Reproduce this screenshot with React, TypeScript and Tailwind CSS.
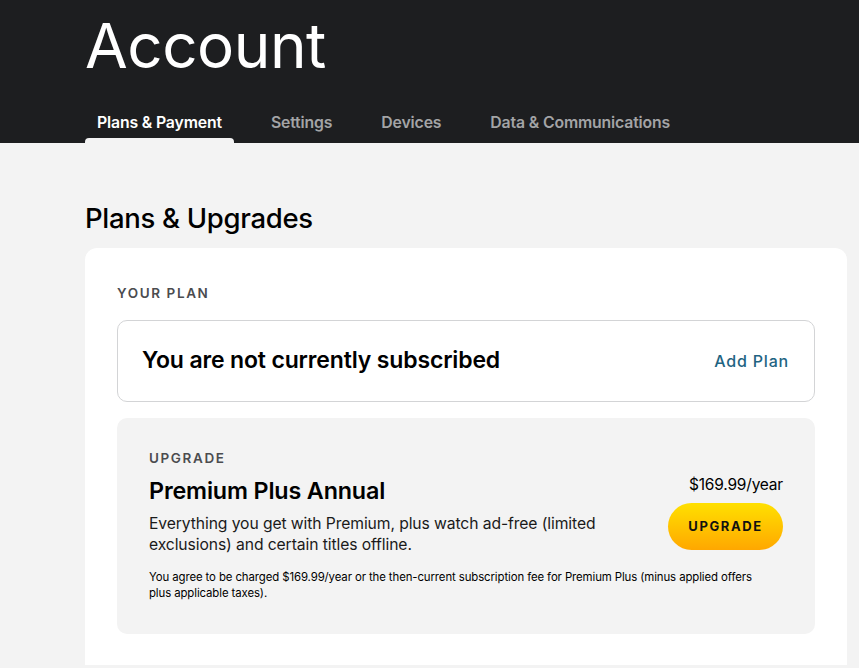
import React from "react"

const tabs = ["Plans & Payment", "Settings", "Devices", "Data & Communications"]

export default function App() {
  return (
    <div className="min-h-[668px] bg-[#f3f3f3] font-['Inter',sans-serif] text-black">
      {/* Header */}
      <div className="bg-[#1d1e20] h-[143px] px-[85px] flex flex-col">
        <h1 className="text-[62px] leading-none font-normal text-white mt-[15px] tracking-[-0.5px]">Account</h1>
        <div className="flex mt-auto">
          {tabs.map((t, i) => (
            <div key={t} className={`flex flex-col items-center ${i > 0 ? "ml-[25px]" : ""}`}>
              <span
                className={`px-[12px] text-[15.8px] font-semibold leading-none pb-[7px] tracking-[-0.15px] ${
                  i === 0 ? "text-white" : "text-[#a3a4a6]"
                }`}
              >
                {t}
              </span>
              <div className={`h-[5px] w-full rounded-t-[4px] ${i === 0 ? "bg-[#f3f3f3]" : "bg-transparent"}`} />
            </div>
          ))}
        </div>
      </div>

      {/* Content */}
      <div className="px-[85px] pt-[58px]">
        <h2 className="text-[27.5px] leading-[34px] font-medium text-black tracking-[-0.3px]">Plans &amp; Upgrades</h2>

        <div className="mt-[13px] bg-white rounded-t-[12px] px-[32px] pt-[39px] pb-[31px] w-[762px]">
          <p className="text-[13.5px] font-semibold tracking-[1.6px] text-[#4b4c4f] leading-none">YOUR PLAN</p>

          <div className="mt-[19px] h-[82px] border border-[#d3d4d6] rounded-[10px] flex items-center justify-between pl-[24px] pr-[25px]">
            <span className="text-[23px] font-semibold tracking-[-0.15px]">You are not currently subscribed</span>
            <span className="text-[16px] font-medium text-[#1f6482] tracking-[0.8px]">Add Plan</span>
          </div>

          <div className="mt-[16px] bg-[#f3f3f3] rounded-[10px] px-[32px] pt-[34px] pb-[33px]">
            <p className="text-[13.5px] font-semibold tracking-[1.6px] text-[#4b4c4f] leading-none">UPGRADE</p>
            <div className="flex justify-between items-start">
              <div className="w-[470px]">
                <h3 className="mt-[12px] text-[23.3px] font-semibold leading-[28px] tracking-[-0.15px]">Premium Plus Annual</h3>
                <p className="mt-[8px] text-[15.7px] leading-[21px] text-[#1a1a1a] tracking-[-0.1px]">
                  Everything you get with Premium, plus watch ad-free (limited exclusions) and certain titles offline.
                </p>
              </div>
              <div className="flex flex-col items-end">
                <span className="mt-[10px] text-[15.5px] leading-[20px] tracking-[-0.2px]">$169.99/year</span>
                <button className="mt-[8px] w-[115px] h-[47px] rounded-full bg-gradient-to-b from-[#ffe000] to-[#ffa700] text-[13px] font-bold tracking-[1.6px] text-[#111]">
                  UPGRADE
                </button>
              </div>
            </div>
            <p className="mt-[14px] text-[11.4px] leading-[16px] text-black w-[625px] tracking-[-0.1px]">
              You agree to be charged $169.99/year or the then-current subscription fee for Premium Plus (minus applied offers plus applicable taxes).
            </p>
          </div>
        </div>
      </div>
    </div>
  )
}
